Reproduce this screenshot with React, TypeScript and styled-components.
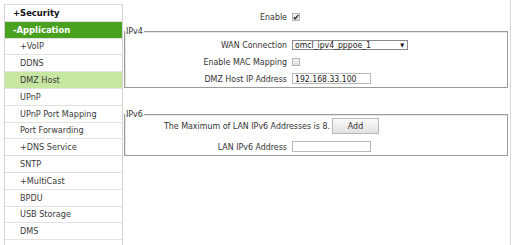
import React from "react";
import styled, { createGlobalStyle } from "styled-components";

const Global = createGlobalStyle`
  html, body { margin: 0; padding: 0; background: #fff; }
  body {
    font-family: "DejaVu Sans Condensed", "DejaVu Sans", sans-serif;
    font-stretch: condensed;
    font-size: 8.8px;
    color: #333;
  }
`;

const Page = styled.div`
  display: flex;
  align-items: flex-start;
  width: 520px;
  height: 245px;
  overflow: hidden;
`;

const Sidebar = styled.ul`
  list-style: none;
  margin: 4px 0 0 4px;
  padding: 0;
  width: 117px;
  border-top: 1px solid #dcdcdc;
  border-left: 1px solid #d4d4d4;
  border-right: 1px solid #d4d4d4;
  font-size: 9px;
`;

type ItemKind = "top" | "open" | "sub" | "active";

const Item = styled.li<{ $kind: ItemKind }>`
  box-sizing: border-box;
  height: 16.8px;
  display: flex;
  align-items: center;
  border-bottom: 1px solid #e2e2e2;
  padding-left: ${(p) => (p.$kind === "top" || p.$kind === "open" ? 8 : 15)}px;
  font-weight: ${(p) => (p.$kind === "top" || p.$kind === "open" ? 700 : 400)};
  font-size: ${(p) => (p.$kind === "top" || p.$kind === "open" ? 9.4 : 9)}px;
  color: ${(p) => (p.$kind === "open" ? "#fff" : p.$kind === "top" ? "#111" : "#3a3a3a")};
  background: ${(p) =>
    p.$kind === "open" ? "#4aa11f" : p.$kind === "active" ? "#c6e6a1" : "#fff"};
  white-space: nowrap;
`;

const Main = styled.div`
  width: 387px;
  height: 245px;
  border-right: 1px solid #d6d6d6;
  display: flex;
  flex-direction: column;
`;

const Row = styled.div`
  display: grid;
  grid-template-columns: 162px auto;
  column-gap: 5px;
  align-items: center;
  height: 17px;
`;

const EnableRow = styled(Row)`
  margin-top: 8px;
  padding-left: 2px;
`;

const Label = styled.span`
  text-align: right;
  white-space: nowrap;
`;

const Fieldset = styled.fieldset<{ $top: number }>`
  margin: ${(p) => p.$top}px 2px 0 1px;
  padding: 0;
  border: 1px solid #9a9a9a;
  box-shadow: inset 1px 1px 0 #e6e6e6;
  display: flex;
  flex-direction: column;
  min-width: 0;
`;

const Legend = styled.legend`
  padding: 0 1px;
  margin-left: 0;
  line-height: 10px;
  height: 10px;
  color: #333;
`;

const Box = styled.span`
  box-sizing: border-box;
  width: 8px;
  height: 8px;
  border: 1px solid #b4b4b4;
  background: linear-gradient(#f6f6f6, #dcdcdc);
  display: inline-flex;
  align-items: center;
  justify-content: center;
`;

const Checkbox = ({ checked }: { checked?: boolean }) => (
  <Box>
    {checked && (
      <svg width="6" height="6" viewBox="0 0 6 6">
        <path d="M0.8 3.2 L2.3 4.8 L5.3 0.9" fill="none" stroke="#222" strokeWidth="1.3" />
      </svg>
    )}
  </Box>
);

const Select = styled.div`
  box-sizing: border-box;
  width: 116px;
  height: 10px;
  border: 1px solid #8a8a8a;
  display: flex;
  align-items: center;
  justify-content: space-between;
  padding: 0 3px 0 2px;
  color: #222;
  line-height: 8px;
  font-size: 8.6px;
`;

const Arrow = styled.span`
  font-size: 5.5px;
  color: #111;
`;

const TextInput = styled.input`
  box-sizing: border-box;
  width: 79px;
  height: 11px;
  border: 1px solid #b9b9b9;
  padding: 0 2px;
  margin: 0;
  font: inherit;
  font-size: 8.6px;
  color: #222;
  outline: none;
  background: #fff;
`;

const MaxRow = styled.div`
  display: flex;
  align-items: center;
  height: 17px;
  margin-top: -2px;
`;

const MaxText = styled.span`
  width: 205px;
  text-align: right;
  white-space: nowrap;
`;

const Button = styled.button`
  box-sizing: border-box;
  margin-left: 2px;
  width: 47px;
  height: 16px;
  border: 1px solid #b8b8b8;
  background: linear-gradient(#fafafa, #e2e2e2);
  font: inherit;
  color: #333;
  padding: 0;
`;

const Rows = styled.div<{ $gap: number }>`
  display: flex;
  flex-direction: column;
  gap: ${(p) => p.$gap}px;
`;

const menu: { label: string; kind: ItemKind }[] = [
  { label: "+Security", kind: "top" },
  { label: "-Application", kind: "open" },
  { label: "+VoIP", kind: "sub" },
  { label: "DDNS", kind: "sub" },
  { label: "DMZ Host", kind: "active" },
  { label: "UPnP", kind: "sub" },
  { label: "UPnP Port Mapping", kind: "sub" },
  { label: "Port Forwarding", kind: "sub" },
  { label: "+DNS Service", kind: "sub" },
  { label: "SNTP", kind: "sub" },
  { label: "+MultiCast", kind: "sub" },
  { label: "BPDU", kind: "sub" },
  { label: "USB Storage", kind: "sub" },
  { label: "DMS", kind: "sub" },
  { label: "", kind: "sub" },
];

export default function App() {
  return (
    <>
      <Global />
      <Page>
        <Sidebar>
          {menu.map((m, i) => (
            <Item key={i} $kind={m.kind}>
              {m.label}
            </Item>
          ))}
        </Sidebar>
        <Main>
          <EnableRow>
            <Label>Enable</Label>
            <Checkbox checked />
          </EnableRow>
          <Fieldset $top={1}>
            <Legend>IPv4</Legend>
            <Rows $gap={0}>
              <Row>
                <Label>WAN Connection</Label>
                <Select>
                  <span>omcl_ipv4_pppoe_1</span>
                  <Arrow>▼</Arrow>
                </Select>
              </Row>
              <Row>
                <Label>Enable MAC Mapping</Label>
                <Checkbox />
              </Row>
              <Row>
                <Label>DMZ Host IP Address</Label>
                <TextInput defaultValue="192.168.33.100" />
              </Row>
            </Rows>
          </Fieldset>
          <Fieldset $top={21}>
            <Legend>IPv6</Legend>
            <Rows $gap={4}>
              <MaxRow>
                <MaxText>The Maximum of LAN IPv6 Addresses is 8.</MaxText>
                <Button type="button">Add</Button>
              </MaxRow>
              <Row>
                <Label>LAN IPv6 Address</Label>
                <TextInput defaultValue="" />
              </Row>
            </Rows>
          </Fieldset>
        </Main>
      </Page>
    </>
  );
}
